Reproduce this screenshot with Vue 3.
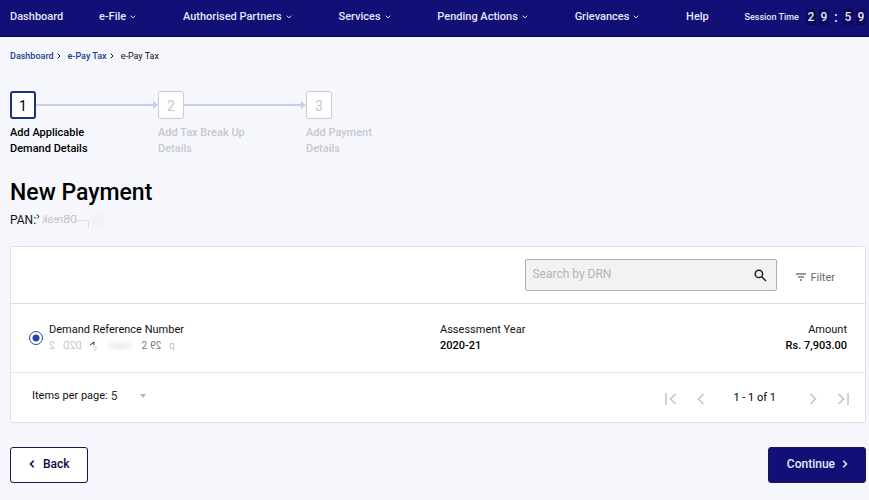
<script setup>
import { ref } from 'vue'

const menu = [
  { label: 'Dashboard' },
  { label: 'e-File', dropdown: true },
  { label: 'Authorised Partners', dropdown: true },
  { label: 'Services', dropdown: true },
  { label: 'Pending Actions', dropdown: true },
  { label: 'Grievances', dropdown: true },
  { label: 'Help' }
]
const steps = [
  { id: 1, lines: ['Add Applicable', 'Demand Details'] },
  { id: 2, lines: ['Add Tax Break Up', 'Details'] },
  { id: 3, lines: ['Add Payment', 'Details'] }
]
const clock = ['2', '9', ':', '5', '9']
const current = ref(1)
const search = ref('')
const selected = ref('demand-1')
const pageSize = ref('5')
</script>

<template>
  <div class="page">
    <header class="navbar">
      <nav class="menu">
        <a
          v-for="item in menu"
          :key="item.label"
          href="#"
          class="menu-link"
          :class="{ dropdown: item.dropdown }"
        >{{ item.label }}<svg v-if="item.dropdown" width="6" height="4" viewBox="0 0 6 4"><path d="M.8.7 3 2.9 5.2.7" /></svg></a>
        <div class="session">
          <span class="session-label">Session Time</span>
          <span
            v-for="(c, i) in clock"
            :key="i"
            :class="c === ':' ? 'colon' : 'digit'"
          >{{ c }}</span>
        </div>
      </nav>
    </header>

    <main class="content">
      <nav class="breadcrumb">
        <a href="#">Dashboard</a>
        <svg width="4" height="6" viewBox="0 0 4 6"><path d="M.7.7 3 3 .7 5.3" /></svg>
        <a href="#">e-Pay Tax</a>
        <svg width="4" height="6" viewBox="0 0 4 6"><path d="M.7.7 3 3 .7 5.3" /></svg>
        <span>e-Pay Tax</span>
      </nav>

      <ol class="stepper">
        <li v-for="step in steps" :key="step.id" class="step" :class="{ active: step.id === current }">
          <div class="step-head">
            <span class="step-box">{{ step.id }}</span>
            <span v-if="step.id < steps.length" class="step-line">
              <svg width="5" height="8" viewBox="0 0 5 8"><path d="M0 0 5 4 0 8z" /></svg>
            </span>
          </div>
          <div class="step-text">
            <div v-for="line in step.lines" :key="line">{{ line }}</div>
          </div>
        </li>
      </ol>

      <h1>New Payment</h1>
      <p class="pan">PAN:<svg width="4" height="6" viewBox="0 0 4 6"><path d="M.7.5 3 2.5 1.2 4.5" /></svg><span class="flipped">DBreak</span><svg class="corner" width="13" height="8" viewBox="0 0 13 8"><path d="M0 .5h11.5V8" /></svg><span class="smudge"></span></p>

      <section class="card">
        <div class="toolbar">
          <div class="search">
            <input v-model="search" type="text" placeholder="Search by DRN" aria-label="Search by DRN">
            <button class="icon-button search-button" aria-label="Search">
              <svg width="13" height="13" viewBox="0 0 13 13"><circle cx="4.9" cy="4.9" r="3.7" /><path d="m7.7 7.7 4.3 4.3" /></svg>
            </button>
          </div>
          <button class="filter">
            <svg width="10" height="8" viewBox="0 0 10 8"><path d="M0 1h10M2 4h6M4 7h2" /></svg>
            Filter
          </button>
        </div>

        <div class="demand">
          <input id="demand-1" v-model="selected" type="radio" value="demand-1" name="demand">
          <label for="demand-1" class="demand-cells">
            <span class="cell">
              <span>Demand Reference Number</span>
              <span class="masked">
                <span class="flipped faint">2</span>
                <span class="flipped faint">D2D</span>
                <svg width="10" height="10" viewBox="0 0 10 10"><path class="dark" d="M1 4 5 1v3" /><path d="M4 6h3v3H4M9 1h1" /></svg>
                <span class="blot"></span>
                <span class="grey">2</span>
                <span class="flipped dim">29</span>
                <span class="flipped faint">p</span>
              </span>
            </span>
            <span class="cell">
              <span>Assessment Year</span>
              <strong>2020-21</strong>
            </span>
            <span class="cell right">
              <span>Amount</span>
              <strong>Rs. 7,903.00</strong>
            </span>
          </label>
        </div>

        <div class="paginator">
          <label for="page-size">Items per page:</label>
          <div class="select">
            <select id="page-size" v-model="pageSize">
              <option>5</option>
              <option>10</option>
              <option>20</option>
            </select>
            <svg width="6" height="4" viewBox="0 0 6 4"><path d="M0 0h6L3 4z" /></svg>
          </div>
          <div class="pager">
            <button class="icon-button" aria-label="First page">
              <svg width="12" height="12" viewBox="0 0 12 12"><path d="M1 0v12M10.5 1 5.5 6l5 5" /></svg>
            </button>
            <button class="icon-button" aria-label="Previous page">
              <svg width="8" height="12" viewBox="0 0 8 12"><path d="M6.5 1 1.5 6l5 5" /></svg>
            </button>
            <span class="range">1 - 1 of 1</span>
            <button class="icon-button" aria-label="Next page">
              <svg width="8" height="12" viewBox="0 0 8 12"><path d="m1.5 1 5 5-5 5" /></svg>
            </button>
            <button class="icon-button" aria-label="Last page">
              <svg width="12" height="12" viewBox="0 0 12 12"><path d="M11 0v12M1.5 1l5 5-5 5" /></svg>
            </button>
          </div>
        </div>
      </section>

      <div class="actions">
        <button class="btn">
          <svg width="6" height="8" viewBox="0 0 6 8"><path d="M4.7.8 1.5 4l3.2 3.2" /></svg>
          Back
        </button>
        <button class="btn primary">
          Continue
          <svg width="6" height="8" viewBox="0 0 6 8"><path d="M1.3.8 4.5 4 1.3 7.2" /></svg>
        </button>
      </div>
    </main>
  </div>
</template>

<style>
body {
  background: #f6f7fc;
}
</style>

<style scoped>
.page {
  font-family: Roboto, "Liberation Sans", sans-serif;
  font-size: 11px;
  line-height: 16px;
  color: #111;
}

button, input, select {
  font-family: inherit;
}

svg {
  fill: none;
  stroke: currentColor;
  flex: none;
}

a {
  text-decoration: none;
}

.navbar {
  background: #120f77;
  border-bottom: 1px solid #0a0850;
}

.menu {
  display: flex;
  align-items: center;
  justify-content: space-between;
  height: 36px;
  box-sizing: border-box;
  padding: 0 3px 2px 10px;
}

.menu-link {
  color: #e6e5f8;
  font-weight: 500;
  white-space: nowrap;
}

.dropdown {
  display: flex;
  align-items: center;
  gap: 4px;
  margin-right: 11px;
}

.session {
  display: flex;
  align-items: center;
  gap: 3px;
  color: #e6e5f8;
}

.session-label {
  font-size: 9px;
  font-weight: 500;
  margin-right: 4px;
}

.digit {
  width: 10px;
  background: #0c0a55;
  font-size: 12px;
  font-weight: 500;
  text-align: center;
}

.colon {
  width: 8px;
  font-size: 14px;
  font-weight: 500;
  text-align: center;
}

.content {
  padding: 11px 3px 0 10px;
}

.breadcrumb {
  display: flex;
  align-items: center;
  font-size: 9px;
}

.breadcrumb a {
  color: #1c3c94;
  font-weight: 500;
}

.breadcrumb svg {
  margin: 0 7px 0 3px;
}

.stepper {
  display: flex;
  list-style: none;
  margin: 27px 0 0;
  padding: 0;
}

.step {
  width: 148px;
  color: #c6c7d2;
}

.step-head {
  display: flex;
  align-items: center;
}

.step-box {
  width: 26px;
  height: 28px;
  box-sizing: border-box;
  border: 1px solid #c9cad8;
  border-radius: 3px;
  background: #fff;
  font-size: 14px;
  line-height: 28px;
  text-align: center;
}

.step-line {
  flex: 1;
  display: flex;
  align-items: center;
  color: #cccde6;
}

.step-line::before {
  content: "";
  flex: 1;
  height: 2px;
  background: #cccde6;
}

.step-line svg {
  fill: currentColor;
  stroke: none;
}

.step-text {
  margin-top: 6px;
  font-weight: 500;
}

.active {
  color: #000;
}

.active .step-box {
  border: 2px solid #1b3474;
  line-height: 26px;
}

h1 {
  margin: 21px 0 0;
  font-size: 23px;
  font-weight: 500;
  line-height: 30px;
  color: #000;
}

.pan {
  display: flex;
  align-items: center;
  margin: 4px 0 0;
  font-size: 12px;
}

.pan svg {
  margin-bottom: 6px;
}

.pan .corner {
  margin: 8px 0 0;
  color: #dcdde2;
}

.flipped {
  display: inline-block;
  transform: scaleX(-1);
}

.pan .flipped {
  margin-left: 2px;
  font-size: 11px;
  color: #c3c4ca;
}

.smudge {
  width: 16px;
  height: 16px;
  background: radial-gradient(#f0f1f5, #f6f7fc);
}

.card {
  margin-top: 18px;
  background: #fff;
  border: 1px solid #dfe0e7;
  border-radius: 3px;
}

.toolbar {
  display: flex;
  align-items: center;
  justify-content: flex-end;
  gap: 19px;
  height: 56px;
  padding-right: 30px;
  border-bottom: 1px solid #dddee4;
}

.search {
  display: flex;
  align-items: center;
  width: 252px;
  height: 32px;
  box-sizing: border-box;
  border: 1px solid #aeaeae;
  border-radius: 2px;
  background: #f2f2f2;
}

.search input {
  flex: 1;
  min-width: 0;
  border: 0;
  padding: 0 0 3px 6px;
  background: none;
  font-size: 12px;
  outline: none;
}

.search input::placeholder {
  color: #b5b5b5;
}

.icon-button {
  display: flex;
  border: 0;
  padding: 0;
  background: none;
  color: #c3c3c3;
}

.icon-button svg {
  stroke-width: 1.5;
}

.search-button {
  margin-right: 9px;
  color: #1e1e1e;
}

.filter {
  display: flex;
  align-items: center;
  gap: 4px;
  border: 0;
  padding: 4px 0 0;
  background: none;
  font-size: 11px;
  color: #6a6a6a;
}

.filter svg {
  color: #333;
}

.demand {
  display: flex;
  align-items: center;
  height: 68px;
  padding: 0 18px;
  border-bottom: 1px solid #e4e5ea;
}

.demand input {
  appearance: none;
  width: 14px;
  height: 14px;
  margin: 0 6px 0 0;
  border: 1px solid #2b4694;
  border-radius: 50%;
  background: radial-gradient(#1f45b0 3px, #fff 4px);
}

.demand-cells {
  flex: 1;
  display: grid;
  grid-template-columns: 49% 1fr auto;
  padding-bottom: 1px;
}

.cell {
  display: flex;
  flex-direction: column;
}

.cell strong {
  font-weight: 500;
  color: #000;
}

.right {
  text-align: right;
}

.masked {
  display: flex;
  align-items: center;
  gap: 8px;
  font-size: 10px;
}

.masked svg {
  color: #cfcfcf;
}

.masked .dark {
  stroke: #222;
}

.faint {
  color: #c4c4c4;
}

.grey {
  color: #777;
}

.dim {
  margin-left: -5px;
  color: #777;
}

.blot {
  width: 26px;
  height: 10px;
  background: radial-gradient(#ebebe8, #fff);
}

.paginator {
  display: flex;
  align-items: center;
  height: 49px;
  padding: 0 16px 0 21px;
}

.paginator label {
  padding-bottom: 4px;
}

.select {
  display: flex;
  align-items: center;
  position: relative;
  margin-left: 3px;
  padding-bottom: 4px;
}

.select select {
  appearance: none;
  width: 37px;
  border: 0;
  padding: 0;
  background: none;
  font-size: 12px;
  color: #333;
}

.select svg {
  position: absolute;
  right: 2px;
  fill: #b5b5b5;
  stroke: none;
}

.pager {
  display: flex;
  align-items: center;
  gap: 20px;
  margin-left: auto;
  padding-top: 3px;
}

.range {
  margin: 0 7px 0 8px;
  padding-bottom: 2px;
  color: #000;
}

.pager .range + .icon-button {
  margin-left: 6px;
}

.actions {
  display: flex;
  justify-content: space-between;
  margin-top: 24px;
}

.btn {
  display: flex;
  align-items: center;
  gap: 8px;
  height: 36px;
  padding: 0 17px 2px 18px;
  border: 1px solid #1a1650;
  border-radius: 3px;
  background: #fff;
  font-size: 12px;
  font-weight: 500;
  color: #0d0b45;
}

.btn svg {
  stroke-width: 1.6;
}

.primary {
  gap: 7px;
  background: #120f77;
  color: #e8e8fa;
}
</style>
